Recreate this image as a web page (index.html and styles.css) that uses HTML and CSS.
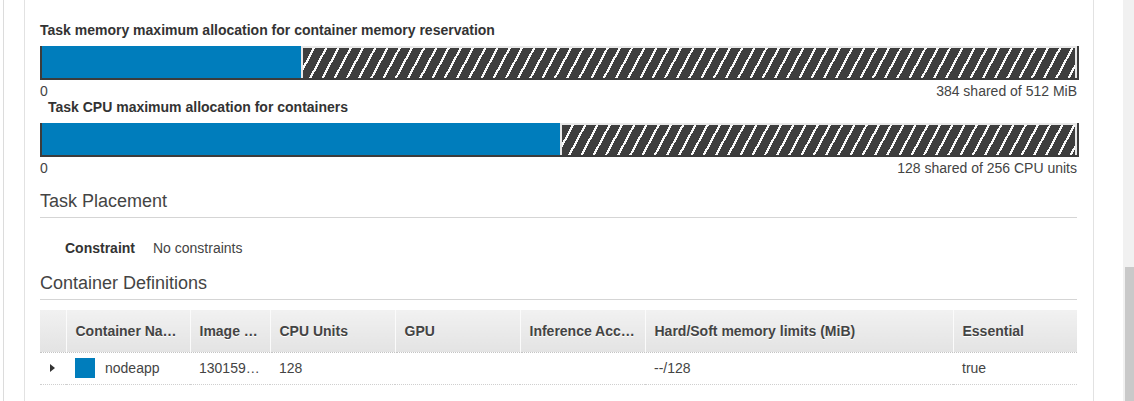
FILE: index.html
```html
<!DOCTYPE html>
<html>
<head>
<meta charset="utf-8">
<link rel="stylesheet" href="styles.css">
</head>
<body>
<div class="page">
  <div class="outer">
    <div class="panel">
      <div class="alloc">
        <div class="alloc-label">Task memory maximum allocation for container memory reservation</div>
        <div class="bar">
          <div class="bar-used" style="width:25%"></div>
          <div class="bar-shared"></div>
        </div>
        <div class="bar-scale"><span>0</span><span>384 shared of 512 MiB</span></div>
      </div>
      <div class="alloc">
        <div class="alloc-label indent">Task CPU maximum allocation for containers</div>
        <div class="bar">
          <div class="bar-used" style="width:50%"></div>
          <div class="bar-shared"></div>
        </div>
        <div class="bar-scale"><span>0</span><span>128 shared of 256 CPU units</span></div>
      </div>

      <h2 class="section-title">Task Placement</h2>
      <div class="kv">
        <span class="kv-key">Constraint</span>
        <span class="kv-val">No constraints</span>
      </div>

      <h2 class="section-title">Container Definitions</h2>
      <table class="grid">
        <colgroup>
          <col class="c0"><col class="c1"><col class="c2"><col class="c3"><col class="c4"><col class="c5"><col class="c6"><col class="c7">
        </colgroup>
        <thead>
          <tr>
            <th></th>
            <th>Container Na…</th>
            <th>Image …</th>
            <th>CPU Units</th>
            <th>GPU</th>
            <th>Inference Acc…</th>
            <th>Hard/Soft memory limits (MiB)</th>
            <th>Essential</th>
          </tr>
        </thead>
        <tbody>
          <tr>
            <td class="exp"><span class="caret"></span></td>
            <td><div class="name-cell"><span class="swatch"></span><span>nodeapp</span></div></td>
            <td>130159…</td>
            <td>128</td>
            <td></td>
            <td></td>
            <td>--/128</td>
            <td>true</td>
          </tr>
        </tbody>
      </table>
    </div>
  </div>
  <div class="scrollbar"><div class="thumb"></div></div>
</div>
</body>
</html>
```

FILE: styles.css
```css
* { box-sizing: border-box; }
html, body { margin: 0; padding: 0; background: #fff; }
body {
  font-family: "Liberation Sans", Arial, sans-serif;
  font-size: 14px;
  color: #444;
  width: 1134px;
  height: 401px;
  overflow: hidden;
}
.page {
  display: flex;
  height: 401px;
}
.outer {
  width: 1123px;
  margin-left: 3px;
  border-left: 1px solid #dcdcdc;
  padding-left: 20px;
}
.panel {
  width: 1070px;
  height: 100%;
  border-left: 1px solid #e2e2e2;
  border-right: 1px solid #e2e2e2;
  padding: 22px 15px 0 15px;
}
.alloc-label {
  font-weight: bold;
  color: #333;
  line-height: 16px;
  height: 16px;
}
.alloc-label.indent { margin-left: 8px; }
.bar {
  display: flex;
  margin-top: 8px;
  height: 34px;
  width: 1039px;
  border-left: 2px solid #3c3c3c;
  border-right: 2px solid #3c3c3c;
  border-bottom: 2px solid #3c3c3c;
}
.bar-used {
  background: #007dbc;
  height: 100%;
}
.bar-shared {
  flex: 1;
  height: 100%;
  border: 2px solid #e8e8e8;
  border-bottom: 0;
  background: repeating-linear-gradient(118deg, #3e3e3e 0 8.6px, #fafafa 8.6px 10.8px);
}
.bar-scale {
  display: flex;
  justify-content: space-between;
  width: 1037px;
  line-height: 16px;
  margin-top: 3px;
  color: #444;
}
.section-title {
  margin: 15px 0 0 0;
  font-size: 18px;
  font-weight: normal;
  color: #444;
  line-height: 20px;
  padding-bottom: 6px;
  border-bottom: 1px solid #d5d5d5;
  width: 1037px;
}
.kv {
  display: flex;
  gap: 18px;
  padding-left: 25px;
  margin-top: 22px;
  line-height: 16px;
}
.kv-key { font-weight: bold; color: #333; }
.kv + .section-title { margin-top: 17px; }
.grid {
  margin-top: 10px;
  border-collapse: collapse;
  table-layout: fixed;
  width: 1037px;
}
.c0 { width: 26px; }
.c1 { width: 124px; }
.c2 { width: 80px; }
.c3 { width: 125px; }
.c4 { width: 125px; }
.c5 { width: 125px; }
.c6 { width: 308px; }
.c7 { width: 124px; }
.grid th {
  height: 42px;
  text-align: left;
  font-weight: bold;
  color: #444;
  padding: 0 9px;
  background: linear-gradient(#f1f1f1, #e3e3e3);
  border-left: 1px solid #fbfbfb;
  border-bottom: 1px dotted #c4c4c4;
  white-space: nowrap;
  overflow: hidden;
  text-shadow: 0 1px 0 #fff;
}
.grid th:first-child { border-left: 0; }
.grid td {
  height: 32px;
  padding: 0 9px;
  border-bottom: 1px dotted #cfcfcf;
  white-space: nowrap;
  overflow: hidden;
  color: #444;
}
.grid td.exp { padding: 0 0 0 10px; }
.caret {
  display: block;
  width: 0;
  height: 0;
  border-top: 4px solid transparent;
  border-bottom: 4px solid transparent;
  border-left: 5px solid #333;
}
.name-cell {
  display: flex;
  align-items: center;
  gap: 10px;
}
.swatch {
  width: 20px;
  height: 20px;
  background: #007dbc;
}
.scrollbar {
  width: 11px;
  height: 401px;
  background: #f1f1f1;
  display: flex;
  flex-direction: column;
  padding-top: 267px;
}
.thumb {
  flex: 1;
  margin-left: 2px;
  background: #c9c9c9;
}
```
